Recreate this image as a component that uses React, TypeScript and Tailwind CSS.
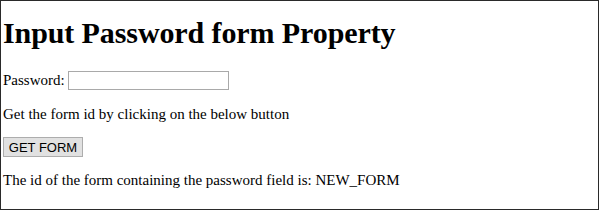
import React from 'react';

export default function App() {
  return (
    <div className="w-[600px] h-[211px] bg-white">
      <div className="w-[599px] h-[210px] border border-[#2a2a2a] pl-[2px] pt-[14px] text-black font-['Liberation_Serif',serif] text-[15px]">
        <h1 className="text-[30px] font-bold leading-[36px] tracking-[-0.1px]">Input Password form Property</h1>
        <div className="mt-[19px] flex items-center h-[20px]">
          <span>Password:</span>
          <input
            type="password"
            className="ml-[3px] w-[161px] h-[19px] border border-[#a9a9a9] bg-white"
          />
        </div>
        <p className="mt-[15px] leading-[18px]">Get the form id by clicking on the below button</p>
        <button
          type="button"
          className="mt-[14px] h-[20px] w-[80px] border border-[#adadad] bg-[#e1e1e1] font-['Liberation_Sans',sans-serif] text-[13px] text-black leading-none"
        >
          GET FORM
        </button>
        <p className="mt-[13px] leading-[18px]">The id of the form containing the password field is: NEW_FORM</p>
      </div>
    </div>
  );
}
